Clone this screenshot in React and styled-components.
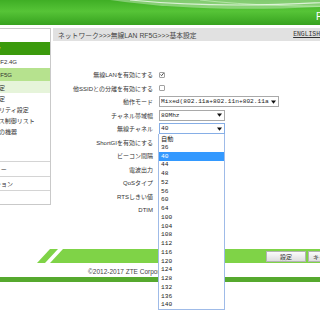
import React from 'react';
import styled, { createGlobalStyle } from 'styled-components';

const GlobalStyle = createGlobalStyle`
  html {
    overflow: hidden;
  }
  body {
    margin: 0;
    padding: 0;
    min-height: 320px;
    background: #ffffff;
    font-family: "Liberation Sans", "Noto Sans CJK JP", sans-serif;
  }
`;

const Page = styled.div`
  width: 440px;
  margin-left: -60px;
  font-size: 6px;
  color: #333;
`;

const Header = styled.header`
  position: relative;
  height: 25px;
  display: flex;
  align-items: center;
  padding-left: 376px;
  background: linear-gradient(180deg, #3fae25 0%, #56c437 45%, #37a21f 100%);
  overflow: hidden;
`;

const HeaderWave = styled.svg`
  position: absolute;
  top: 0;
  left: 0;
`;

const ModelName = styled.span`
  position: relative;
  color: #fff;
  font-size: 10px;
  margin-top: 8px;
`;

const Main = styled.div`
  display: flex;
  align-items: flex-start;
  gap: 2px;
  margin-top: 3px;
`;

const Sidebar = styled.nav`
  width: 111px;
  box-sizing: border-box;
  border: 1px solid #c9c9c9;
  background: #fff;
  display: flex;
  flex-direction: column;
`;

const tones = {
  dark: { bg: '#3b9a0c', fg: '#fff' },
  light: { bg: '#b6e28e', fg: '#333' },
  pale: { bg: '#e6f4da', fg: '#333' },
  none: { bg: 'transparent', fg: '#333' },
};

const MenuItem = styled.div`
  height: ${(p) => p.$h}px;
  display: flex;
  align-items: center;
  padding-left: ${(p) => (p.$level === 1 ? 24 : p.$level === 2 ? 36 : 40)}px;
  background: ${(p) => tones[p.$tone || 'none'].bg};
  color: ${(p) => tones[p.$tone || 'none'].fg};
  border-top: ${(p) => (p.$divider ? '1px solid #d4d4d4' : 'none')};
  white-space: nowrap;
`;

const MenuSpacer = styled.div`
  height: 24px;
`;

const Content = styled.section`
  flex: 1;
`;

const Breadcrumb = styled.div`
  height: 13px;
  background: #e1e1e1;
  display: flex;
  align-items: center;
  justify-content: space-between;
  padding: 0 60px 0 5px;
  color: #444;
  font-size: 6.8px;
`;

const LangLink = styled.a`
  font-family: "Liberation Mono", monospace;
  font-size: 6.4px;
  color: #333;
  text-decoration: underline;
`;

const Form = styled.div`
  margin-top: 27px;
  display: flex;
  flex-direction: column;
`;

const FormRow = styled.div`
  height: 13.5px;
  display: grid;
  grid-template-columns: 100px auto;
  column-gap: 6px;
  align-items: center;
`;

const Label = styled.span`
  text-align: right;
  white-space: nowrap;
`;

const Check = styled.span`
  width: 6px;
  height: 6px;
  box-sizing: border-box;
  border: 1px solid #a2a2a2;
  border-radius: 1px;
  background: #fff;
  display: flex;
  align-items: center;
  justify-content: center;
`;

const SelectWrap = styled.div`
  position: relative;
  width: ${(p) => p.$w}px;
`;

const SelectBox = styled.div`
  height: 11px;
  box-sizing: border-box;
  border: 1px solid ${(p) => (p.$focused ? '#86aee6' : '#a9a9a9')};
  background: #fff;
  display: flex;
  align-items: center;
  gap: 2px;
  padding: 0 2px 0 1px;
  font-family: "Liberation Mono", "Noto Sans CJK JP", monospace;
  font-size: 6.2px;
  color: #222;
`;

const SelectValue = styled.span`
  flex: 1;
  min-width: 0;
  overflow: hidden;
  white-space: nowrap;
`;

const OptionList = styled.div`
  position: absolute;
  top: 100%;
  left: -1px;
  right: 0;
  box-sizing: border-box;
  border: 1px solid #9fbbe8;
  border-top: none;
  background: #fff;
  z-index: 5;
`;

const OptionItem = styled.div`
  height: 8.75px;
  display: flex;
  align-items: center;
  padding-left: 2px;
  font-family: "Liberation Mono", "Noto Sans CJK JP", monospace;
  font-size: 6.2px;
  background: ${(p) => (p.$active ? '#3399ff' : '#fff')};
  color: ${(p) => (p.$active ? '#fff' : '#222')};
`;

const Footer = styled.footer`
  margin-top: 32.5px;
`;

const BarRow = styled.div`
  display: flex;
  height: 14px;
  padding-left: 97px;
`;

const GreenBar = styled.div`
  flex: 1;
  background: #7fd347;
  display: flex;
  align-items: center;
  justify-content: flex-end;
  gap: 2px;
  padding-right: 32px;
`;

const Button = styled.button`
  width: 40px;
  height: 11px;
  padding: 0;
  border: 1px solid #b3b3b3;
  background: linear-gradient(180deg, #fbfbfb, #dedede);
  font-family: "Liberation Sans", "Noto Sans CJK JP", sans-serif;
  font-size: 6px;
  color: #333;
`;

const Copyright = styled.div`
  margin-top: 5px;
  padding-left: 148px;
  line-height: 8px;
  font-size: 6.5px;
  color: #444;
`;

const BottomLine = styled.div`
  margin-top: 1px;
  height: 5px;
  background: #56a92e;
`;

const Arrow = () => (
  <svg width="5" height="4" viewBox="0 0 5 4" style={{ flexShrink: 0 }}>
    <path d="M0 0.5 L5 0.5 L2.5 3.8 Z" fill="#111" />
  </svg>
);

const Select = ({ width, value, focused, children }) => (
  <SelectWrap $w={width}>
    <SelectBox $focused={focused}>
      <SelectValue>{value}</SelectValue>
      <Arrow />
    </SelectBox>
    {children}
  </SelectWrap>
);

const channels = ['自動', '36', '40', '44', '48', '52', '56', '60', '64', '100', '104', '108', '112', '116', '120', '124', '128', '132', '136', '140'];

const labels = ['ShortGIを有効にする', 'ビーコン間隔', '電波出力', 'QoSタイプ', 'RTSしきい値', 'DTIM'];

export default function App() {
  return (
    <Page>
      <GlobalStyle />
      <Header>
        <HeaderWave width="440" height="25" viewBox="0 0 440 25">
          <path d="M170 0 Q280 16 440 3 L440 0 Z" fill="#ffffff" opacity="0.35" />
          <path d="M190 0 Q290 10 420 0" stroke="#ffffff" strokeWidth="1.2" fill="none" opacity="0.7" />
          <path d="M260 0 Q330 8 440 6" stroke="#e8ffe0" strokeWidth="0.8" fill="none" opacity="0.6" />
        </HeaderWave>
        <ModelName>F50</ModelName>
      </Header>

      <Main>
        <Sidebar>
          <MenuItem $level={1} $h={13}>ステータス</MenuItem>
          <MenuItem $level={1} $h={13} $tone="dark">ネットワーク</MenuItem>
          <MenuItem $level={2} $h={13}>WLAN RF2.4G</MenuItem>
          <MenuItem $level={2} $h={13} $tone="light">WLAN RF5G</MenuItem>
          <MenuItem $level={3} $h={12} $tone="pale">基本設定</MenuItem>
          <MenuItem $level={3} $h={11}>詳細設定</MenuItem>
          <MenuItem $level={3} $h={11}>セキュリティ設定</MenuItem>
          <MenuItem $level={3} $h={11}>アクセス制御リスト</MenuItem>
          <MenuItem $level={3} $h={11}>接続中の機器</MenuItem>
          <MenuSpacer />
          <MenuItem $level={1} $h={14} $divider>セキュリティー</MenuItem>
          <MenuItem $level={1} $h={13} $divider>アプリケーション</MenuItem>
          <MenuItem $level={1} $h={13} $divider>管理</MenuItem>
        </Sidebar>

        <Content>
          <Breadcrumb>
            <span>ネットワーク&gt;&gt;&gt;無線LAN RF5G&gt;&gt;&gt;基本設定</span>
            <LangLink>ENGLISH</LangLink>
          </Breadcrumb>

          <Form>
            <FormRow>
              <Label>無線LANを有効にする</Label>
              <Check>
                <svg width="5" height="5" viewBox="0 0 5 5">
                  <path d="M0.6 2.6 L2 4 L4.5 0.8" stroke="#222" strokeWidth="1" fill="none" />
                </svg>
              </Check>
            </FormRow>
            <FormRow>
              <Label>他SSIDとの分離を有効にする</Label>
              <Check />
            </FormRow>
            <FormRow>
              <Label>動作モード</Label>
              <Select width={120} value="Mixed(802.11a+802.11n+802.11a" />
            </FormRow>
            <FormRow>
              <Label>チャネル帯域幅</Label>
              <Select width={66} value="80Mhz" />
            </FormRow>
            <FormRow>
              <Label>無線チャネル</Label>
              <Select width={66} value="40" focused>
                <OptionList>
                  {channels.map((c) => (
                    <OptionItem key={c} $active={c === '40'}>{c}</OptionItem>
                  ))}
                </OptionList>
              </Select>
            </FormRow>
            {labels.map((l) => (
              <FormRow key={l}>
                <Label>{l}</Label>
                <span />
              </FormRow>
            ))}
          </Form>
        </Content>
      </Main>

      <Footer>
        <BarRow>
          <svg width="26" height="14" viewBox="0 0 26 14">
            <polygon points="0,14 13,0 21,0 8,14" fill="#7fd347" />
            <polygon points="13,14 26,0 26,14" fill="#7fd347" />
          </svg>
          <GreenBar>
            <Button>設定</Button>
            <Button>キャンセル</Button>
          </GreenBar>
        </BarRow>
        <Copyright>©2012-2017 ZTE Corporation</Copyright>
        <BottomLine />
      </Footer>
    </Page>
  );
}
